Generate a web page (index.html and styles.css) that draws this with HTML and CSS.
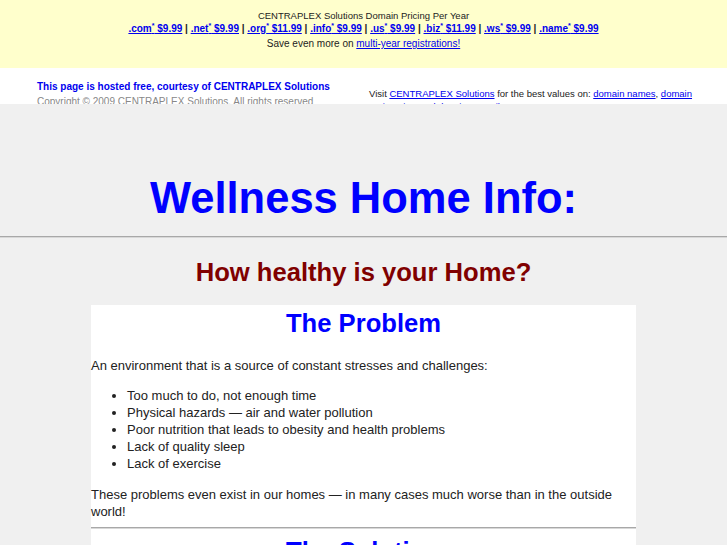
FILE: index.html
```html
<!DOCTYPE html>
<html>
<head>
<meta charset="utf-8">
<title>Wellness Home Info</title>
<link rel="stylesheet" href="styles.css">
</head>
<body>
<div class="topframe">
  <div class="pricing">
    <div class="p-title">CENTRAPLEX Solutions Domain Pricing Per Year</div>
    <div class="p-prices">
      <a href="#">.com<sup>*</sup> $9.99</a> | <a href="#">.net<sup>*</sup> $9.99</a> | <a href="#">.org<sup>*</sup> $11.99</a> | <a href="#">.info<sup>*</sup> $9.99</a> | <a href="#">.us<sup>*</sup> $9.99</a> | <a href="#">.biz<sup>*</sup> $11.99</a> | <a href="#">.ws<sup>*</sup> $9.99</a> | <a href="#">.name<sup>*</sup> $9.99</a>
    </div>
    <div class="p-save">Save even more on <a href="#">multi-year registrations!</a></div>
  </div>
  <div class="hostbar">
    <div class="host-left">
      <div class="host-free">This page is hosted free, courtesy of CENTRAPLEX Solutions</div>
      <div class="host-copy">Copyright © 2009 CENTRAPLEX Solutions. All rights reserved</div>
    </div>
    <div class="host-right">
      Visit <a href="#">CENTRAPLEX Solutions</a> for the best values on: <a href="#">domain names</a>, <a href="#">domain registration</a>, <a href="#">web hosting</a>, <a href="#">email</a>
    </div>
  </div>
</div>

<div class="page">
  <h1 class="title">Wellness Home Info:</h1>
  <hr class="rule">
  <h2 class="subtitle">How healthy is your Home?</h2>
  <div class="box">
    <h3 class="section">The Problem</h3>
    <p class="lead">An environment that is a source of constant stresses and challenges:</p>
    <ul>
      <li>Too much to do, not enough time</li>
      <li>Physical hazards — air and water pollution</li>
      <li>Poor nutrition that leads to obesity and health problems</li>
      <li>Lack of quality sleep</li>
      <li>Lack of exercise</li>
    </ul>
    <p>These problems even exist in our homes — in many cases much worse than in the outside world!</p>
    <hr class="rule">
    <h3 class="section next">The Solution</h3>
    <p class="lead">A home designed to support the health of the people who live in it.</p>
  </div>
</div>
</body>
</html>
```

FILE: styles.css
```css
html, body {
  margin: 0;
  padding: 0;
}
body {
  background: #f0f0f0;
  font-family: "Liberation Sans", Arial, sans-serif;
  color: #222;
}
a {
  color: #0000ee;
}
.topframe {
  height: 104px;
  overflow: hidden;
  background: #ffffff;
}
.pricing {
  background: #ffffcc;
  height: 68px;
  box-sizing: border-box;
  padding-top: 9px;
  text-align: center;
  color: #222;
}
.p-title {
  font-size: 9.5px;
  line-height: 13px;
}
.p-prices {
  font-size: 10px;
  line-height: 13px;
  font-weight: bold;
}
.p-prices sup {
  font-size: 7px;
  line-height: 0;
}
.p-save {
  font-size: 10px;
  line-height: 13px;
  margin-top: 2px;
}
.hostbar {
  display: flex;
  padding-top: 11px;
}
.host-left {
  width: 332px;
  padding-left: 37px;
  font-size: 10px;
  line-height: 15px;
}
.host-free {
  font-weight: bold;
  color: #0000ee;
}
.host-copy {
  color: #888;
}
.host-right {
  width: 332px;
  padding-top: 8px;
  font-size: 9.5px;
  line-height: 13px;
  color: #222;
}
.page {
  padding-top: 68px;
}
.title {
  margin: 0;
  text-align: center;
  color: #0000ff;
  font-size: 43.5px;
  line-height: 52px;
}
.rule {
  margin: 12px 0 0;
  border: 0;
  border-top: 1px solid #a8a8a8;
  border-bottom: 1px solid #d8d8d8;
}
.subtitle {
  margin: 20px 0 0;
  text-align: center;
  color: #800000;
  font-size: 25.6px;
  line-height: 28px;
}
.box {
  width: 545px;
  margin: 19px auto 0;
  background: #ffffff;
  font-size: 13px;
  line-height: 17px;
}
.section {
  margin: 0;
  padding-top: 4px;
  text-align: center;
  color: #0000ff;
  font-size: 25.6px;
  line-height: 28px;
}
.box p {
  margin: 0;
  padding: 0;
}
.box .lead {
  margin-top: 20px;
}
.box ul {
  margin: 13px 0 14px;
  padding-left: 36px;
}
.box .rule {
  margin: 7px 0 0;
}
.section.next {
  padding-top: 8px;
}
```
